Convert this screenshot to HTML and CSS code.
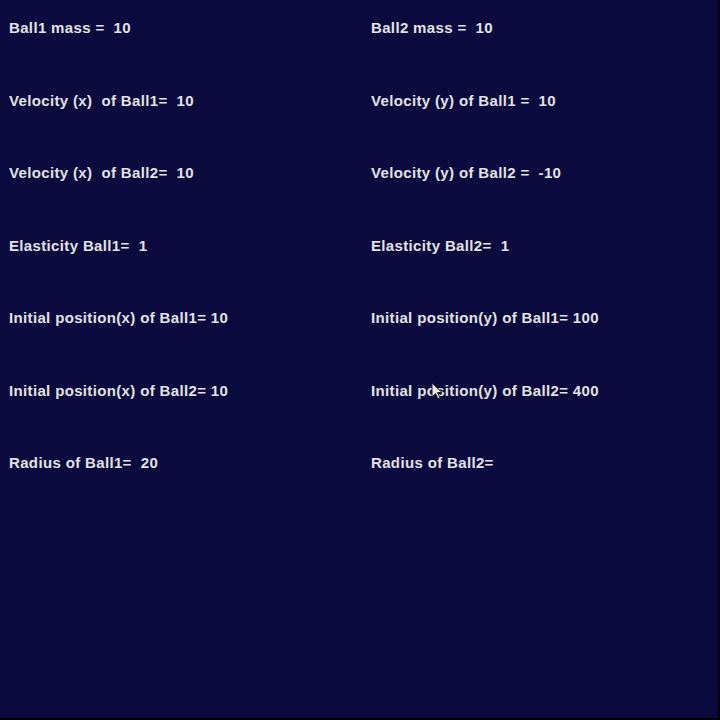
FILE: index.html
```html
<!DOCTYPE html>
<html>
<head>
<meta charset="utf-8">
<link rel="stylesheet" href="styles.css">
</head>
<body>
<div class="screen">
  <div class="grid">
    <div class="cell">Ball1 mass =  10</div>
    <div class="cell">Ball2 mass =  10</div>
    <div class="cell">Velocity (x)  of Ball1=  10</div>
    <div class="cell">Velocity (y) of Ball1 =  10</div>
    <div class="cell">Velocity (x)  of Ball2=  10</div>
    <div class="cell">Velocity (y) of Ball2 =  -10</div>
    <div class="cell">Elasticity Ball1=  1</div>
    <div class="cell">Elasticity Ball2=  1</div>
    <div class="cell">Initial position(x) of Ball1= 10</div>
    <div class="cell">Initial position(y) of Ball1= 100</div>
    <div class="cell">Initial position(x) of Ball2= 10</div>
    <div class="cell">Initial position(y) of Ball2= 400</div>
    <div class="cell">Radius of Ball1=  20</div>
    <div class="cell">Radius of Ball2=</div>
  </div>
  <svg class="cursor" width="12" height="18" viewBox="0 0 12 18">
    <path d="M1 1 L1 15 L4.5 11.5 L7 17 L9 16 L6.5 10.5 L11 10.5 Z" fill="#e8e8e8" stroke="#222" stroke-width="1"/>
  </svg>
</div>
</body>
</html>
```
FILE: styles.css
```css
html, body {
  margin: 0;
  padding: 0;
  background: #000;
}
.screen {
  position: relative;
  width: 718px;
  height: 718px;
  background: #0a0a3e;
  overflow: hidden;
}
.grid {
  display: grid;
  grid-template-columns: 362px 356px;
  grid-auto-rows: 72.5px;
  padding: 19px 0 0 9px;
}
.cell {
  font-family: "Liberation Sans", Arial, sans-serif;
  font-weight: bold;
  font-size: 15px;
  line-height: 18px;
  letter-spacing: 0.35px;
  color: #e2e2e2;
  white-space: pre;
}
.cursor {
  position: absolute;
  left: 431px;
  top: 382px;
}
```
